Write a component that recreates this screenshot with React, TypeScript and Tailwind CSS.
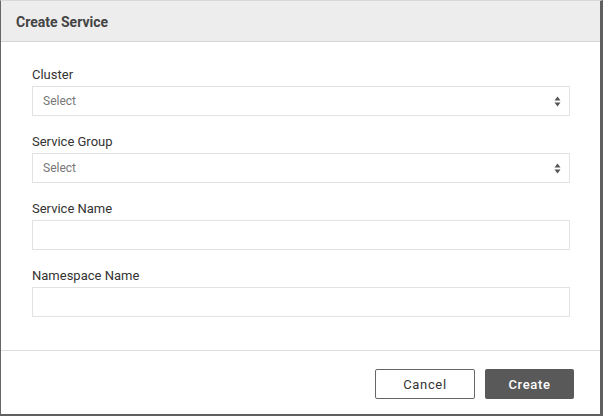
import { ReactNode } from 'react';

function SortArrows() {
  return (
    <svg width="7" height="11" viewBox="0 0 7 11" className="shrink-0">
      <path d="M3.5 0.5 L6.5 4.5 L0.5 4.5 Z" fill="#555" />
      <path d="M0.5 6.5 L6.5 6.5 L3.5 10.5 Z" fill="#555" />
    </svg>
  );
}

function Field({ label, children }: { label: string; children: ReactNode }) {
  return (
    <div className="flex flex-col">
      <label className="text-[13px] leading-4 text-[#333] mb-[3px]">{label}</label>
      {children}
    </div>
  );
}

function SelectBox() {
  return (
    <div className="h-[30px] border border-[#e2e2e2] flex items-center justify-between pl-[10px] pr-[8px]">
      <span className="text-[12px] text-[#777]">Select</span>
      <SortArrows />
    </div>
  );
}

function TextBox() {
  return <div className="h-[30px] border border-[#e2e2e2]" />;
}

export default function App() {
  return (
    <div
      className="w-[603px] h-[416px] bg-white flex flex-col border-l border-r-[3px] border-b-2 border-t border-l-[#666] border-r-[#5f5f5f] border-b-[#5f5f5f] border-t-[#d8d8d8]"
      style={{ fontFamily: 'Roboto, "Liberation Sans", sans-serif' }}
    >
      <div className="h-[41px] bg-[#ededed] border-b border-[#d6d6d6] flex items-center pl-[15px] pt-[2px] shrink-0">
        <h2 className="text-[14px] font-bold text-[#444]">Create Service</h2>
      </div>
      <div className="flex flex-col gap-[18px] pl-[31px] pr-[30px] pt-[25px] pb-[33px] border-b border-[#dcdcdc]">
        <Field label="Cluster">
          <SelectBox />
        </Field>
        <Field label="Service Group">
          <SelectBox />
        </Field>
        <Field label="Service Name">
          <TextBox />
        </Field>
        <Field label="Namespace Name">
          <TextBox />
        </Field>
      </div>
      <div className="flex justify-end gap-[10px] pt-[18px] pr-[26px]">
        <button className="w-[100px] h-[30px] pt-[2px] border border-[#666] rounded-[2px] bg-white text-[13px] tracking-[0.05em] text-[#333]">
          Cancel
        </button>
        <button className="w-[89px] h-[30px] pt-[2px] rounded-[2px] bg-[#595959] text-[13px] font-medium tracking-[0.05em] text-white">
          Create
        </button>
      </div>
    </div>
  );
}
